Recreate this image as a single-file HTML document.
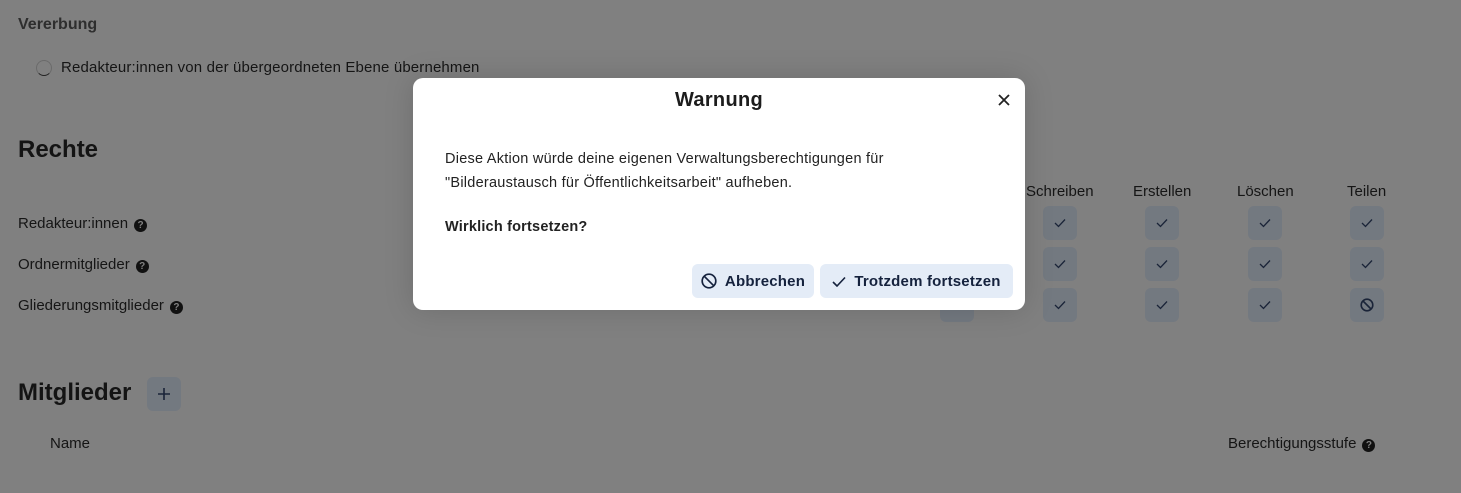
<!DOCTYPE html>
<html><head><meta charset="utf-8"><style>
*{margin:0;padding:0;box-sizing:border-box}
body{width:1461px;height:493px;overflow:hidden;background:#808080;font-family:"Liberation Sans",sans-serif;color:#141414;position:relative}
.a{position:absolute;white-space:nowrap}
.s{font-size:15px;color:#151515}
.q{display:inline-block;width:13px;height:13px;border-radius:50%;background:#111;color:#808080;font-size:10px;font-weight:bold;text-align:center;line-height:13px;vertical-align:0px;margin-left:6px}
.cb{position:absolute;width:34px;height:34px;border-radius:6px;background:#737980;display:flex;align-items:center;justify-content:center}
.m{position:absolute;left:413px;top:78px;width:612px;height:232px;background:#fff;border-radius:10px;box-shadow:0 0 30px rgba(0,0,0,.15)}
.btn{position:absolute;top:186px;height:34px;background:#e4ecf7;border-radius:6px;color:#15223d;font-weight:bold;font-size:15px;letter-spacing:.2px;display:flex;align-items:center;justify-content:center;gap:8px}
</style></head><body>
<div class="a" style="left:18px;top:16px;font-size:16px;font-weight:bold;color:#2e2e2e">Vererbung</div>
<div class="a" style="left:36px;top:60px;width:16px;height:16px;border-radius:50%;border:1.5px solid #6a6a6a;border-bottom-color:#222"></div>
<div class="a s" style="left:61px;top:59px;letter-spacing:.15px">Redakteur:innen von der übergeordneten Ebene übernehmen</div>
<div class="a" style="left:18px;top:136px;font-size:24px;font-weight:bold;color:#141414">Rechte</div>
<div class="a s" style="left:18px;top:215px">Redakteur:innen<span class="q">?</span></div>
<div class="a s" style="left:18px;top:256px">Ordnermitglieder<span class="q">?</span></div>
<div class="a s" style="left:18px;top:297px">Gliederungsmitglieder<span class="q">?</span></div>
<div class="a s" style="left:1026px;top:183px">Schreiben</div>
<div class="a s" style="left:1133px;top:183px">Erstellen</div>
<div class="a s" style="left:1237px;top:183px">Löschen</div>
<div class="a s" style="left:1347px;top:183px">Teilen</div>
<div class="cb" style="left:940px;top:288px"></div>
<div class="cb" style="left:1043px;top:206px"><svg width="12" height="10"><path d="M1 5l3.5 3.5L11 1.5" stroke="#1a2438" stroke-width="1.3" fill="none"/></svg></div>
<div class="cb" style="left:1145px;top:206px"><svg width="12" height="10"><path d="M1 5l3.5 3.5L11 1.5" stroke="#1a2438" stroke-width="1.3" fill="none"/></svg></div>
<div class="cb" style="left:1248px;top:206px"><svg width="12" height="10"><path d="M1 5l3.5 3.5L11 1.5" stroke="#1a2438" stroke-width="1.3" fill="none"/></svg></div>
<div class="cb" style="left:1350px;top:206px"><svg width="12" height="10"><path d="M1 5l3.5 3.5L11 1.5" stroke="#1a2438" stroke-width="1.3" fill="none"/></svg></div>
<div class="cb" style="left:1043px;top:247px"><svg width="12" height="10"><path d="M1 5l3.5 3.5L11 1.5" stroke="#1a2438" stroke-width="1.3" fill="none"/></svg></div>
<div class="cb" style="left:1145px;top:247px"><svg width="12" height="10"><path d="M1 5l3.5 3.5L11 1.5" stroke="#1a2438" stroke-width="1.3" fill="none"/></svg></div>
<div class="cb" style="left:1248px;top:247px"><svg width="12" height="10"><path d="M1 5l3.5 3.5L11 1.5" stroke="#1a2438" stroke-width="1.3" fill="none"/></svg></div>
<div class="cb" style="left:1350px;top:247px"><svg width="12" height="10"><path d="M1 5l3.5 3.5L11 1.5" stroke="#1a2438" stroke-width="1.3" fill="none"/></svg></div>
<div class="cb" style="left:1043px;top:288px"><svg width="12" height="10"><path d="M1 5l3.5 3.5L11 1.5" stroke="#1a2438" stroke-width="1.3" fill="none"/></svg></div>
<div class="cb" style="left:1145px;top:288px"><svg width="12" height="10"><path d="M1 5l3.5 3.5L11 1.5" stroke="#1a2438" stroke-width="1.3" fill="none"/></svg></div>
<div class="cb" style="left:1248px;top:288px"><svg width="12" height="10"><path d="M1 5l3.5 3.5L11 1.5" stroke="#1a2438" stroke-width="1.3" fill="none"/></svg></div>
<div class="cb" style="left:1350px;top:288px"><svg width="14" height="14"><circle cx="7" cy="7" r="5.8" stroke="#1a2438" stroke-width="1.6" fill="none"/><path d="M3 3l8 8" stroke="#1a2438" stroke-width="1.6"/></svg></div>
<div class="a" style="left:18px;top:379px;font-size:24px;font-weight:bold;color:#141414">Mitglieder</div>
<div class="cb" style="left:147px;top:377px"><svg width="14" height="14"><path d="M7 1v12M1 7h12" stroke="#1a2438" stroke-width="1.6"/></svg></div>
<div class="a s" style="left:50px;top:435px">Name</div>
<div class="a s" style="left:1228px;top:435px">Berechtigungsstufe<span class="q">?</span></div>

<div class="m">
<div class="a" style="left:0;width:612px;text-align:center;top:11px;font-size:20px;font-weight:bold;color:#1c1c1c;letter-spacing:.3px">Warnung</div>
<svg class="a" style="left:585px;top:16px" width="12" height="12"><path d="M1 1l10 10M11 1L1 11" stroke="#222" stroke-width="1.8"/></svg>
<div class="a" style="left:32px;top:69px;font-size:14.5px;line-height:24px;color:#222;letter-spacing:.25px">Diese Aktion würde deine eigenen Verwaltungsberechtigungen für<br>"Bilderaustausch für Öffentlichkeitsarbeit" aufheben.</div>
<div class="a" style="left:32px;top:141px;font-size:14.5px;font-weight:bold;color:#222;letter-spacing:.2px">Wirklich fortsetzen?</div>
<div class="btn" style="left:279px;width:122px"><svg width="16" height="16"><circle cx="8" cy="8" r="6.8" stroke="#15223d" stroke-width="1.7" fill="none"/><path d="M3.3 3.3l9.4 9.4" stroke="#15223d" stroke-width="1.7"/></svg>Abbrechen</div>
<div class="btn" style="left:407px;width:193px"><svg width="14" height="11"><path d="M1 6l4 4L13 1.5" stroke="#15223d" stroke-width="1.6" fill="none"/></svg>Trotzdem fortsetzen</div>
</div>
</body></html>
